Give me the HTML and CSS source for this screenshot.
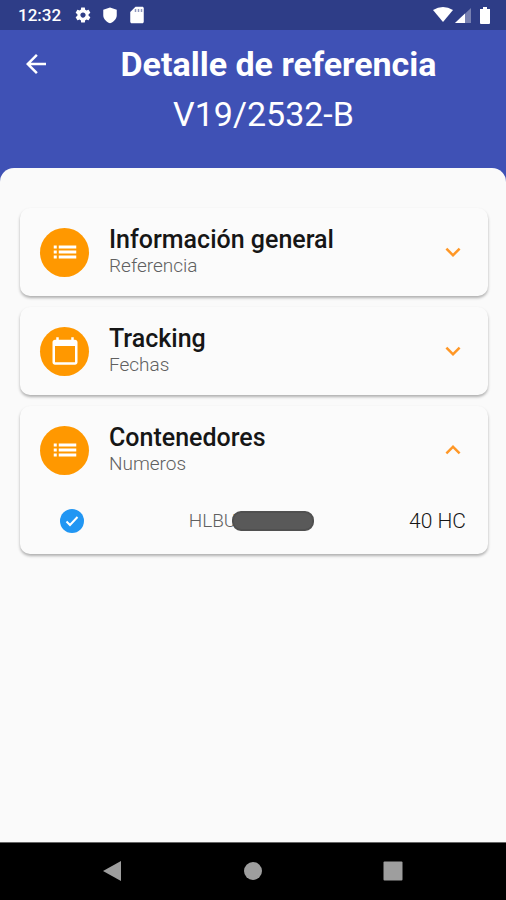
FILE: index.html
```html
<!DOCTYPE html>
<html lang="es">
<head>
<meta charset="utf-8">
<meta name="viewport" content="width=device-width, initial-scale=1">
<title>Detalle de referencia</title>
<link rel="stylesheet" href="styles.css">
</head>
<body>
<div class="status">
  <time class="clock">12:32</time>
  <svg class="status-icon" viewBox="0 0 24 24" aria-hidden="true"><path d="M19.43 12.98c.04-.32.07-.64.07-.98s-.03-.66-.07-.98l2.11-1.65c.19-.15.24-.42.12-.64l-2-3.46c-.12-.22-.39-.3-.61-.22l-2.49 1c-.52-.4-1.08-.73-1.69-.98l-.38-2.65C14.46 2.18 14.25 2 14 2h-4c-.25 0-.46.18-.49.42l-.38 2.65c-.61.25-1.17.59-1.69.98l-2.49-1c-.23-.09-.49 0-.61.22l-2 3.46c-.13.22-.07.49.12.64l2.11 1.65c-.04.32-.07.65-.07.98s.03.66.07.98l-2.11 1.65c-.19.15-.24.42-.12.64l2 3.46c.12.22.39.3.61.22l2.49-1c.52.4 1.08.73 1.69.98l.38 2.65c.03.24.24.42.49.42h4c.25 0 .46-.18.49-.42l.38-2.65c.61-.25 1.17-.59 1.69-.98l2.49 1c.23.09.49 0 .61-.22l2-3.46c.12-.22.07-.49-.12-.64l-2.11-1.65zM12 15.5c-1.93 0-3.5-1.57-3.5-3.5s1.57-3.5 3.5-3.5 3.5 1.57 3.5 3.5-1.57 3.5-3.5 3.5z"/></svg>
  <svg class="status-icon" viewBox="0 0 24 24" aria-hidden="true"><path d="M12 2 3 5v7c0 5.5 3.8 9 9 11 5.200-2 9-5.500 9-11V5z"/></svg>
  <svg class="status-icon" viewBox="0 0 24 24" aria-hidden="true"><path d="M19 1H10L3 8v13c0 1.100.9 2 2 2h14c1.100 0 2-.9 2-2V3c0-1.100-.9-2-2-2z"/><path class="slots" d="M9 4h2v4H9zm4 0h2v4h-2zm4 0h2v4h-2z"/></svg>
  <svg class="signals" viewBox="0 0 58 20" aria-hidden="true"><path d="M0 5Q10-1 20 5L10 17z"/><path class="faint" d="M38 3v15H22z"/><path d="M32 8.600V18H22z"/><path d="M47 4h3V2h4v2h3v14q0 1-1 1h-8q-1 0-1-1z"/></svg>
</div>
<header class="header">
  <button class="back" type="button" aria-label="Volver"><svg class="icon" viewBox="0 0 24 24"><path d="M20 11H7.830l5.590-5.590L12 4l-8 8 8 8 1.410-1.410L7.830 13H20v-2z"/></svg></button>
  <h1 class="title">Detalle de referencia</h1>
  <p class="reference">V19/2532-B</p>
</header>
<main class="sheet">
  <section class="card">
    <button class="card-head" type="button" aria-expanded="false">
      <span class="avatar"><svg class="icon" viewBox="0 0 24 24"><path d="M3 6.800h2.400v2.400H3zm0 4h2.400v2.400H3zm0 4h2.400v2.400H3zM7 6.800h14v2.400H7zm0 4h14v2.400H7zm0 4h14v2.400H7z"/></svg></span>
      <span class="labels"><span class="name">Información general</span><span class="detail">Referencia</span></span>
      <svg class="icon chevron" viewBox="0 0 24 24"><path d="M16.590 8.590 12 13.170 7.410 8.590 6 10l6 6 6-6z"/></svg>
    </button>
  </section>
  <section class="card">
    <button class="card-head" type="button" aria-expanded="false">
      <span class="avatar"><svg class="icon" viewBox="0 0 24 24"><path d="M20 3h-1V1h-2v2H7V1H5v2H4c-1.100 0-2 .9-2 2v16c0 1.100.9 2 2 2h16c1.100 0 2-.9 2-2V5c0-1.100-.9-2-2-2zm0 18H4V8h16v13z"/></svg></span>
      <span class="labels"><span class="name">Tracking</span><span class="detail">Fechas</span></span>
      <svg class="icon chevron" viewBox="0 0 24 24"><path d="M16.590 8.590 12 13.170 7.410 8.590 6 10l6 6 6-6z"/></svg>
    </button>
  </section>
  <section class="card">
    <button class="card-head" type="button" aria-expanded="true">
      <span class="avatar"><svg class="icon" viewBox="0 0 24 24"><path d="M3 6.800h2.400v2.400H3zm0 4h2.400v2.400H3zm0 4h2.400v2.400H3zM7 6.800h14v2.400H7zm0 4h14v2.400H7zm0 4h14v2.400H7z"/></svg></span>
      <span class="labels"><span class="name">Contenedores</span><span class="detail">Numeros</span></span>
      <svg class="icon chevron" viewBox="0 0 24 24"><path d="m12 8-6 6 1.410 1.410L12 10.830l4.590 4.580L18 14z"/></svg>
    </button>
    <div class="container-row">
      <svg class="check" viewBox="0 0 24 24" aria-hidden="true"><circle cx="12" cy="12" r="12"/><path d="m6.500 12.500 3.500 3.500 7.500-8"/></svg>
      <span class="number">HLBU<span class="mask"></span></span>
      <span class="size">40 HC</span>
    </div>
  </section>
</main>
<nav class="navbar">
  <button class="nav-button" type="button" aria-label="Atrás"><svg class="nav-icon" viewBox="0 0 20 20"><path d="M18 0v20L0 10z"/></svg></button>
  <button class="nav-button" type="button" aria-label="Inicio"><svg class="nav-icon" viewBox="0 0 20 20"><circle cx="10" cy="10" r="9"/></svg></button>
  <button class="nav-button" type="button" aria-label="Recientes"><svg class="nav-icon" viewBox="0 0 20 20"><rect width="19" height="19" x=".5" y=".5" rx="1"/></svg></button>
</nav>
</body>
</html>
```
FILE: styles.css
```css
* { box-sizing: border-box; }

body {
  margin: 0;
  min-height: 100vh;
  display: flex;
  flex-direction: column;
  background: #3f51b5;
  font-family: Roboto, "Liberation Sans", sans-serif;
  color: #161616;
}

button {
  margin: 0;
  padding: 0;
  border: 0;
  background: none;
  font: inherit;
  color: inherit;
}

svg { display: block; flex: none; fill: currentColor; }
.icon { width: 30px; height: 30px; }

.status {
  display: flex;
  align-items: center;
  gap: 9px;
  height: 30px;
  padding: 0 15px 0 18px;
  background: #2e3d87;
  color: #fff;
}
.clock { margin-right: 4px; font-size: 17px; font-weight: 500; line-height: 30px; }
.status-icon { width: 18px; height: 18px; }
.slots { fill: #8f97bd; }
.signals { width: 58px; height: 20px; margin-left: auto; }
.faint { opacity: .35; }

.header {
  display: grid;
  grid-template-columns: 30px 1fr;
  column-gap: 8px;
  align-items: center;
  padding: 9px 0 29px 21px;
  color: #fff;
  text-align: center;
}
.title { margin: 0; padding-right: 8px; font-size: 34px; font-weight: 700; line-height: 50px; }
.reference { grid-column: 1 / -1; margin: 0; font-size: 34px; line-height: 50px; }

.sheet {
  flex: 1;
  display: flex;
  flex-direction: column;
  gap: 11px;
  padding: 40px 18px 40px 20px;
  border-radius: 14px 14px 0 0;
  background: #fafafa;
}

.card {
  border-radius: 10px;
  background: #fbfbfb;
  box-shadow: 0 2px 3px rgba(0, 0, 0, .3);
}
.card-head {
  display: flex;
  align-items: center;
  gap: 20px;
  width: 100%;
  min-height: 88px;
  padding: 0 20px;
  text-align: left;
}
.avatar {
  display: grid;
  place-items: center;
  flex: none;
  width: 49px;
  height: 49px;
  border-radius: 50%;
  background: #ff9800;
  color: #fff;
}
.labels { flex: 1; display: flex; flex-direction: column; }
.name { font-size: 25px; font-weight: 500; line-height: 28px; }
.detail { font-size: 19px; font-weight: 300; line-height: 24px; color: #606060; }
.chevron { color: #ff9726; }

.container-row {
  display: grid;
  grid-template-columns: 24px 1fr auto;
  align-items: center;
  padding: 14px 22px 20px 40px;
}
.check { width: 24px; height: 24px; fill: #2196f3; }
.check path { fill: none; stroke: #fff; stroke-width: 2; }
.number {
  display: flex;
  align-items: center;
  justify-content: center;
  padding-left: 10px;
  font-size: 19px;
  font-weight: 300;
  line-height: 26px;
  color: #606060;
}
.mask {
  width: 82px;
  height: 20px;
  margin-left: -4px;
  border: 2px solid #505050;
  border-radius: 9px;
  background: #595959;
}
.size { font-size: 21px; font-weight: 300; line-height: 26px; color: #161616; }

.navbar {
  display: flex;
  justify-content: center;
  align-items: center;
  gap: 80px;
  height: 58px;
  padding-bottom: 2px;
  border-top: 1px solid #666;
  background: #000;
  color: #9e9e9e;
}
.nav-button { display: grid; place-items: center; width: 60px; height: 55px; }
.nav-icon { width: 20px; height: 20px; }
```
